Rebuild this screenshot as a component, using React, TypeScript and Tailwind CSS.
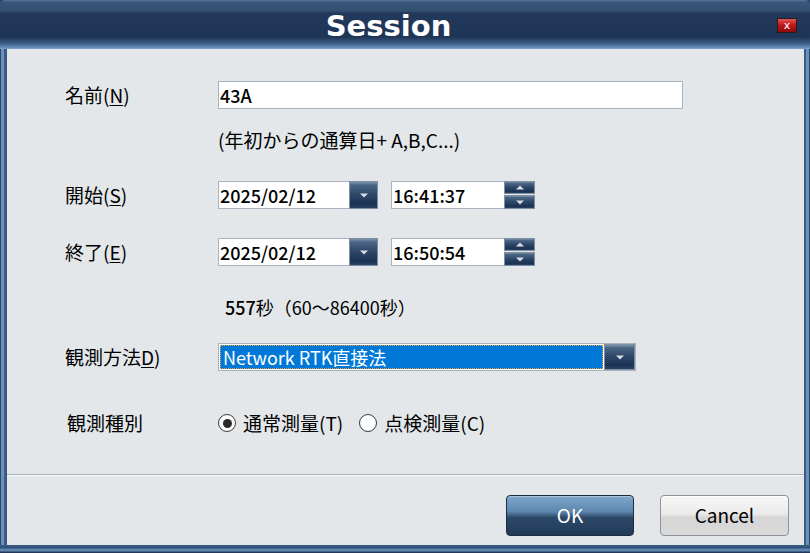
import React from "react";

const F = "font-['Noto_Sans_CJK_JP',sans-serif]";

function Arrow({ up = false }: { up?: boolean }) {
  return (
    <svg width="8" height="5" viewBox="0 0 8 5" className="block">
      {up ? (
        <polygon points="0,4.5 8,4.5 4,0.5" fill="#d5dde6" />
      ) : (
        <polygon points="0,0.5 8,0.5 4,4.5" fill="#d5dde6" />
      )}
    </svg>
  );
}

function DarkBtn({ w, h, up, down }: { w: string; h: string; up?: boolean; down?: boolean }) {
  return (
    <div
      className={`${w} ${h} flex items-center justify-center border border-[#7f8fa3] bg-[linear-gradient(to_bottom,#7b93ad_0%,#4a6584_12%,#2d4668_50%,#1c3252_85%,#2a4365_100%)]`}
    >
      {up && <Arrow up />}
      {down && <Arrow />}
    </div>
  );
}

function DateCombo({ date, time }: { date: string; time: string }) {
  return (
    <div className="flex items-center h-[28px]">
      <div className="flex h-[28px]">
        <div className="w-[131px] h-[28px] bg-white border border-[#a9b3bf] border-r-0 flex items-center pl-[1px] text-[18px] font-medium text-black">
          {date}
        </div>
        <DarkBtn w="w-[29px]" h="h-[28px]" down />
      </div>
      <div className="flex h-[28px] ml-[13px]">
        <div className="w-[113px] h-[28px] bg-white border border-[#a9b3bf] border-r-0 flex items-center pl-[1px] text-[18px] font-medium text-black">
          {time}
        </div>
        <div className="flex flex-col w-[31px] h-[28px] gap-[1px]">
          <DarkBtn w="w-[31px]" h="h-[13px]" up />
          <DarkBtn w="w-[31px]" h="h-[14px]" down />
        </div>
      </div>
    </div>
  );
}

function Label({ children, className = "" }: { children: React.ReactNode; className?: string }) {
  return <div className={`w-[153px] shrink-0 text-[19px] text-black ${className}`}>{children}</div>;
}

function Radio({ checked, label }: { checked: boolean; label: string }) {
  return (
    <div className="flex items-center">
      <div className="w-[18px] h-[18px] rounded-full border border-[#3a3a3a] bg-white flex items-center justify-center">
        {checked && <div className="w-[9px] h-[9px] rounded-full bg-[#2a2a2a]" />}
      </div>
      <span className="ml-[7px] text-[19px] text-black">{label}</span>
    </div>
  );
}

export default function App() {
  return (
    <div className={`w-[810px] h-[553px] flex flex-col overflow-hidden bg-[#2c4769] ${F}`}>
      {/* Title bar */}
      <div className="h-[49px] shrink-0 flex items-center rounded-t-[5px] bg-[linear-gradient(to_bottom,#5a7aa0_0px,#3a5679_2px,#33506f_11px,#22395c_13px,#1f3557_37px,#3e628c_44px,#7aa2cb_49px)]">
        <div className="flex-1 text-center text-white font-bold text-[29px] leading-none font-['DejaVu_Sans',sans-serif] pt-[4px]">
          Session
        </div>
        <div className="w-[20px] h-[15px] mr-[13px] mt-[2px] border border-[#2a1a1a] bg-[linear-gradient(to_bottom,#e0585a_0%,#c3181c_45%,#8c0a0c_100%)] flex items-center justify-center">
          <span className="text-white text-[11px] leading-none font-['DejaVu_Sans',sans-serif]">x</span>
        </div>
      </div>

      {/* Body with side frames */}
      <div className="flex-1 flex">
        <div className="w-[7px] bg-[linear-gradient(to_right,#2c4769_0px,#2c4769_1px,#6b91ba_1px,#6b91ba_4px,#3f628a_4px,#34567e_7px)]" />
        <div className="flex-1 flex flex-col bg-[#e3e7ea] text-black">
          {/* Form area */}
          <div className="h-[425px] flex flex-col pl-[58px] pt-[32px]">
            <div className="flex items-center h-[28px]">
              <Label>
                名前(<span className="underline underline-offset-2">N</span>)
              </Label>
              <div className="w-[465px] h-[28px] bg-white border border-[#a9b3bf] flex items-center pl-[1px] text-[18px] font-medium">
                43A
              </div>
            </div>
            <div className="flex mt-[20px] h-[22px] items-center">
              <div className="w-[153px] shrink-0" />
              <span className="text-[19px] leading-[22px]">(年初からの通算日+ A,B,C...)</span>
            </div>
            <div className="flex items-center mt-[30px] h-[28px]">
              <Label>
                開始(<span className="underline underline-offset-2">S</span>)
              </Label>
              <DateCombo date="2025/02/12" time="16:41:37" />
            </div>
            <div className="flex items-center mt-[29px] h-[28px]">
              <Label>
                終了(<span className="underline underline-offset-2">E</span>)
              </Label>
              <DateCombo date="2025/02/12" time="16:50:54" />
            </div>
            <div className="flex mt-[30px] h-[22px] items-center">
              <div className="w-[160px] shrink-0" />
              <span className="text-[18px] leading-[22px]">
                <span className="font-medium">557</span>秒（60～86400秒）
              </span>
            </div>
            <div className="flex items-center mt-[25px] h-[28px]">
              <Label>
                観測方法<span className="underline underline-offset-2">D</span>)
              </Label>
              <div className="flex h-[28px] w-[418px] border border-[#a9b3bf]">
                <div className="flex-1 p-[1px] bg-white">
                  <div className="h-full bg-[#0078d7] border border-dotted border-[#f0a030] flex items-center pl-[2px] text-white text-[18px]">
                    Network RTK直接法
                  </div>
                </div>
                <DarkBtn w="w-[31px]" h="h-[26px]" down />
              </div>
            </div>
            <div className="flex items-center mt-[40px] h-[24px]">
              <Label className="pl-[2px]">観測種別</Label>
              <div className="flex items-center gap-[16px]">
                <Radio checked label="通常測量(T)" />
                <Radio checked={false} label="点検測量(C)" />
              </div>
            </div>
          </div>
          {/* Separator */}
          <div className="h-[1px] bg-[#a8b3c0]" />
          <div className="h-[1px] bg-[#f7f9fb]" />
          {/* Footer */}
          <div className="flex-1 flex justify-end items-start pt-[19px] pr-[15px] gap-[26px]">
            <button className="w-[128px] h-[41px] rounded-[4px] border border-[#1b2b40] bg-[linear-gradient(to_bottom,#7ea7cb_0%,#5d87ae_40%,#2d4968_55%,#223958_100%)] text-white text-[19px] flex items-center justify-center shadow-[inset_0_1px_0_rgba(255,255,255,0.35)]">
              OK
            </button>
            <button className="w-[129px] h-[41px] rounded-[4px] border border-[#8c939c] bg-[linear-gradient(to_bottom,#f7f7f7_0%,#ebebeb_45%,#d6d6d6_55%,#d9d9d9_100%)] text-black text-[19px] flex items-center justify-center shadow-[inset_0_1px_0_rgba(255,255,255,0.9)]">
              Cancel
            </button>
          </div>
        </div>
        <div className="w-[6px] bg-[linear-gradient(to_right,#34567e_0px,#3f628a_2px,#6b91ba_2px,#6b91ba_5px,#2c4769_5px)]" />
      </div>
      <div className="h-[8px] shrink-0 bg-[linear-gradient(to_bottom,#3a5d85_0px,#2f5078_3px,#5f85ae_4px,#5f85ae_6px,#22385a_7px)]" />
    </div>
  );
}
